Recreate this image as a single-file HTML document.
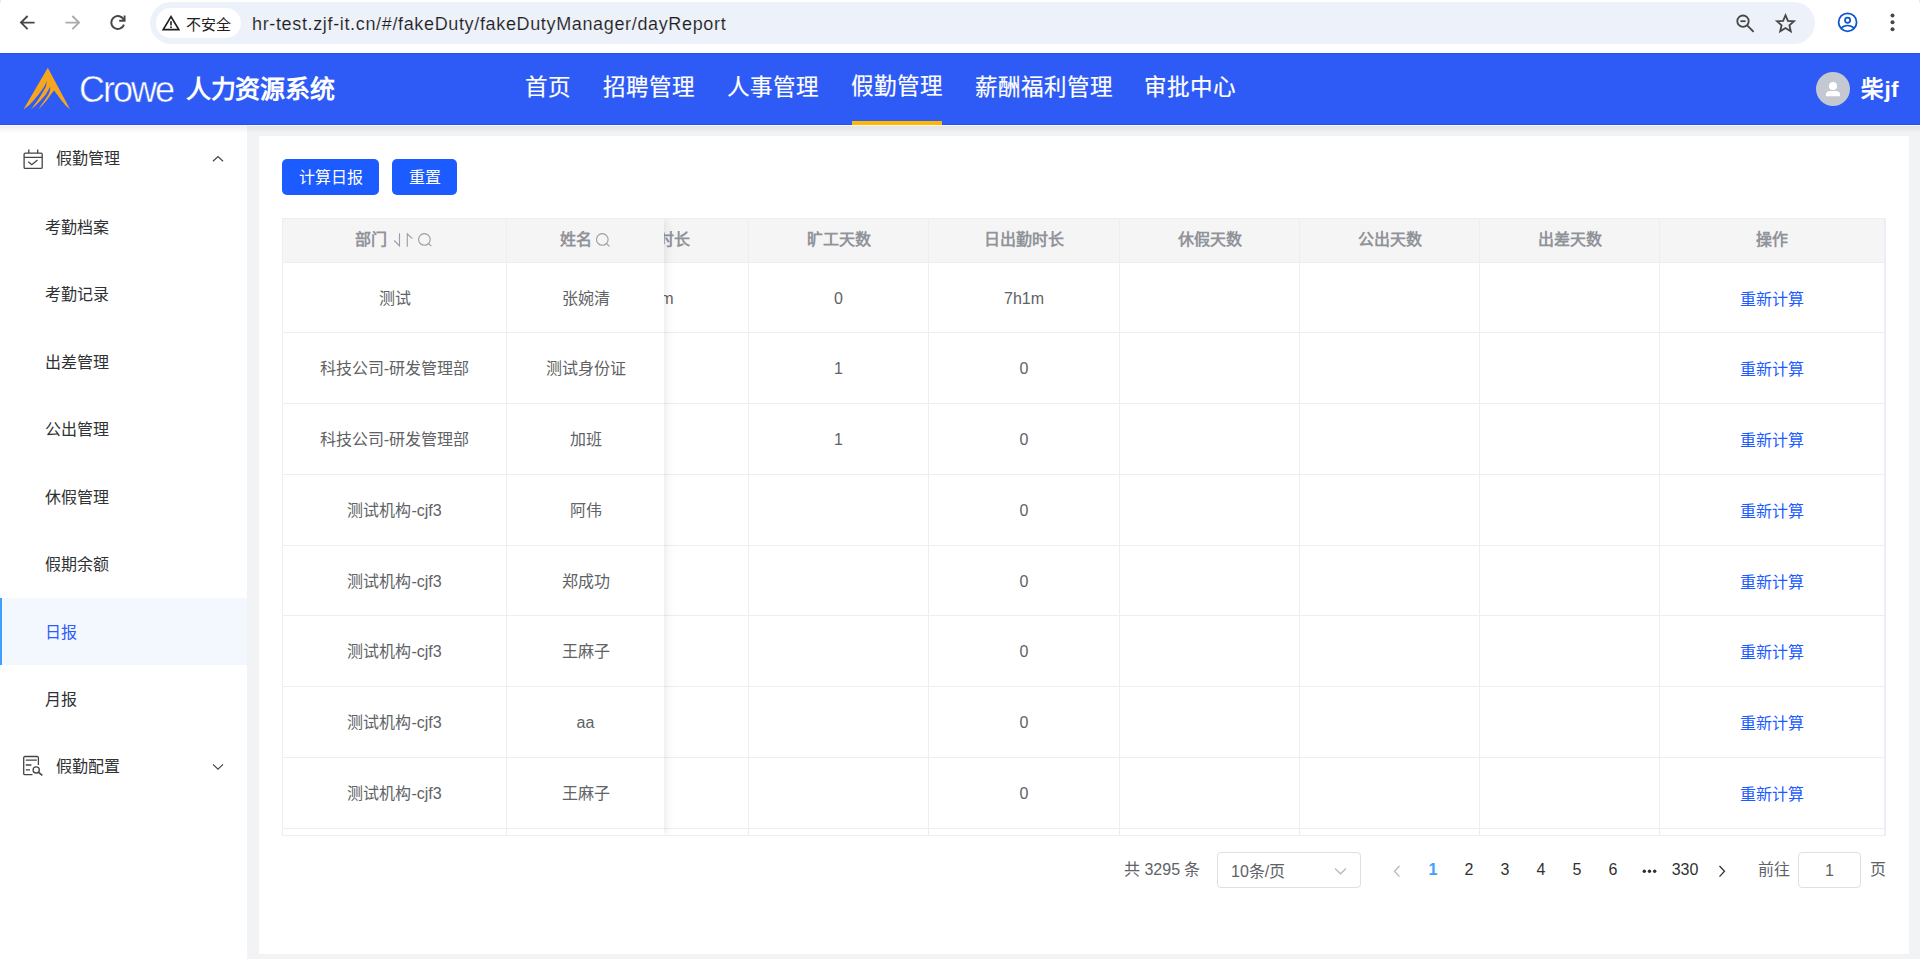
<!DOCTYPE html>
<html lang="zh-CN">
<head>
<meta charset="utf-8">
<title>dayReport</title>
<style>
*{box-sizing:border-box;margin:0;padding:0}
html,body{width:1920px;height:959px;overflow:hidden;background:#f2f3f5;font-family:"Liberation Sans",sans-serif;}
#root{position:relative;width:1920px;height:959px;overflow:hidden;background:#f2f3f5}
.abs{position:absolute}
.t{position:absolute;white-space:nowrap;line-height:1}

/* ---------- browser chrome ---------- */
#chrome{position:absolute;left:0;top:0;width:1920px;height:53px;background:#fff}
#pill{position:absolute;left:150px;top:2px;width:1665px;height:42px;border-radius:21px;background:#edf1fa}
#sec{position:absolute;left:156px;top:8px;width:85px;height:30px;border-radius:15px;background:#fff}

/* ---------- app header ---------- */
#hdr{position:absolute;left:0;top:53px;width:1920px;height:72px;background:#2e5bf6;border-top:1px solid #2551f3;border-bottom:1px solid #2551f3}
#hdrshadow{position:absolute;left:0;top:126px;width:1920px;height:7px;background:linear-gradient(#e2e3e5,rgba(242,243,245,0))}
#hline{position:absolute;left:0;top:125px;width:1920px;height:1px;background:#fbfbf6;z-index:5}
.nav{position:absolute;top:75px;font-size:22.5px;line-height:26px;color:#fff;white-space:nowrap;-webkit-text-stroke:0.2px #fff}

/* ---------- sidebar ---------- */
#side{position:absolute;left:0;top:125px;width:247px;height:834px;background:#fff}
#sideshadow{position:absolute;left:0;top:126px;width:247px;height:7px;background:linear-gradient(#eeeeee,rgba(255,255,255,0))}
.mi{position:absolute;left:45px;font-size:16px;line-height:20px;color:#303133;white-space:nowrap}
.mt{position:absolute;left:56px;font-size:16px;line-height:20px;color:#303133;white-space:nowrap}

/* ---------- content ---------- */
#panel{position:absolute;left:259px;top:136px;width:1650px;height:818px;background:#fff}
.btn{position:absolute;top:159px;height:36px;border-radius:5px;background:#1b5bff;color:#fff;font-size:16px;line-height:38px;text-align:center;white-space:nowrap}

/* table */
#tbl{position:absolute;left:282px;top:218px;width:1604px;height:618px;border:1px solid #ebeef5;background:#fff;overflow:hidden}
#thead{position:absolute;left:0;top:0;width:1602px;height:43px;background:#f5f5f5}
.hl{position:absolute;left:0;width:1602px;height:1px;background:#ebeef5}
.vl{position:absolute;top:0;width:1px;height:616px;background:#ebeef5}
.th{position:absolute;top:-1px;height:43px;line-height:43px;font-size:16px;font-weight:bold;color:#909399;text-align:center;white-space:nowrap}
.td{position:absolute;height:20px;line-height:20px;font-size:16px;color:#606266;text-align:center;white-space:nowrap}
.lk{color:#1b5bff}
#fixed{position:absolute;left:0;top:0;width:381px;height:616px;background:#fff;box-shadow:0 0 10px rgba(0,0,0,.12)}
#fixed .fh{position:absolute;left:0;top:0;width:381px;height:43px;background:#f5f5f5}

/* pagination */
.pg{position:absolute;top:860px;font-size:16px;line-height:20px;color:#303133;white-space:nowrap;text-align:center;width:36px}
</style>
</head>
<body>
<div id="root">

<!-- ================= browser chrome ================= -->
<div id="chrome">
  <div class="abs" style="left:0;top:0;width:1px;height:4px;background:linear-gradient(#d3e3fd,#fff)"></div>
  <div class="abs" style="left:1919px;top:0;width:1px;height:4px;background:linear-gradient(#d3e3fd,#fff)"></div>
  <div id="pill"></div>
  <div id="sec"></div>
  <!-- back -->
  <svg class="abs" style="left:18px;top:13px" width="20" height="20" viewBox="0 0 20 20"><path d="M16.6 9.6H3.4M9.6 3 3 9.6l6.6 6.6" fill="none" stroke="#474747" stroke-width="1.9"/></svg>
  <!-- forward -->
  <svg class="abs" style="left:62px;top:13px" width="20" height="20" viewBox="0 0 20 20"><path d="M3.4 9.6h13.2M10.4 3 17 9.6l-6.6 6.6" fill="none" stroke="#ababab" stroke-width="1.9"/></svg>
  <!-- reload -->
  <svg class="abs" style="left:107px;top:12px" width="22" height="22" viewBox="0 0 22 22"><path d="M16.9 8.2A6.5 6.5 0 1 0 17 12.6" fill="none" stroke="#474747" stroke-width="1.9"/><path d="M17.6 3.4v5.4h-5.4" fill="none" stroke="#474747" stroke-width="1.9"/></svg>
  <!-- warning -->
  <svg class="abs" style="left:161px;top:14px" width="20" height="18" viewBox="0 0 20 18"><path d="M10 2.6 2.2 15.6h15.6z" fill="none" stroke="#1f1f1f" stroke-width="1.7" stroke-linejoin="miter"/><rect x="9.2" y="7.2" width="1.6" height="4.2" fill="#1f1f1f"/><rect x="9.2" y="12.4" width="1.6" height="1.6" fill="#1f1f1f"/></svg>
  <div class="t" style="left:186px;top:16px;font-size:15px;line-height:17px;color:#1f1f1f">不安全</div>
  <div class="t" id="url" style="left:252px;top:13px;font-size:18px;line-height:22px;color:#1f1f1f;letter-spacing:0.65px;-webkit-text-stroke:0.12px #edf1fa">hr-test.zjf-it.cn/#/fakeDuty/fakeDutyManager/dayReport</div>
  <!-- zoom out -->
  <svg class="abs" style="left:1733px;top:11px" width="24" height="24" viewBox="0 0 24 24"><circle cx="10" cy="10.2" r="5.7" fill="none" stroke="#474747" stroke-width="1.8"/><path d="M14.2 14.4l6.4 6.4" stroke="#474747" stroke-width="1.9"/><path d="M7.4 10.2h5.2" stroke="#474747" stroke-width="1.8"/></svg>
  <!-- star -->
  <svg class="abs" style="left:1774px;top:12px" width="24" height="22" viewBox="0 0 24 22"><path d="M11.5 3.2l2.4 5.6 6.1.5-4.6 4 1.4 6-5.3-3.2-5.3 3.2 1.4-6-4.6-4 6.1-.5z" fill="none" stroke="#474747" stroke-width="1.8" stroke-linejoin="miter"/></svg>
  <!-- profile -->
  <svg class="abs" style="left:1836px;top:11px" width="24" height="24" viewBox="0 0 24 24"><circle cx="11.6" cy="11.3" r="9" fill="none" stroke="#0b57d0" stroke-width="1.8"/><circle cx="11.6" cy="9.2" r="2.6" fill="none" stroke="#0b57d0" stroke-width="1.7"/><path d="M5 17.4c1.8-2 4-2.9 6.6-2.9s4.800.9 6.600 2.900" fill="none" stroke="#0b57d0" stroke-width="1.7"/></svg>
  <!-- dots -->
  <svg class="abs" style="left:1886px;top:11px" width="14" height="24" viewBox="0 0 14 24"><circle cx="6.5" cy="4.500" r="2" fill="#474747"/><circle cx="6.5" cy="11.300" r="2" fill="#474747"/><circle cx="6.500" cy="18.300" r="2" fill="#474747"/></svg>
</div>

<!-- ================= header ================= -->
<div id="hdr"></div>
<svg class="abs" style="left:20px;top:64px" width="54" height="50" viewBox="20 64 54 50"><path d="M47.81 67.85L23.42 109.59L29.11 105.36L33.99 99.94L38.60 94.52L41.58 90.46L44.12 86.66L47.00 80.97L45.86 86.66L43.75 90.46L41.41 94.52L37.89 99.94L33.99 105.36L31.01 109.59L35.89 105.36L41.04 99.94L45.75 94.52L48.08 90.46L50.30 86.39L49.98 90.46L48.46 94.52L44.78 99.94L41.04 105.36L38.33 109.59L42.39 105.36L47.00 99.94L50.90 94.52L54.04 90.46L57.13 94.52L61.09 99.94L65.43 105.36L70.14 109.59Z" fill="#f5a61d"/></svg>
<div class="t" id="crowe" style="left:79px;top:70px;font-size:36px;line-height:40px;color:#fff;letter-spacing:-2px;-webkit-text-stroke:0.45px #2e5bf6">Crowe</div>
<div class="t" id="sysname" style="left:186px;top:74px;font-size:25px;line-height:30px;color:#fff;font-weight:bold;letter-spacing:-0.3px">人力资源系统</div>
<div class="nav" style="left:525px">首页</div>
<div class="nav" style="left:603px">招聘管理</div>
<div class="nav" style="left:727px">人事管理</div>
<div class="nav" style="left:851px;top:74px">假勤管理</div>
<div class="nav" style="left:975px">薪酬福利管理</div>
<div class="nav" style="left:1144px">审批中心</div>
<div class="abs" style="left:852px;top:121px;width:90px;height:4px;background:#ffb800"></div>
<div class="abs" style="left:1816px;top:72px;width:34px;height:34px;border-radius:17px;background:#c4c8d0"></div>
<svg class="abs" style="left:1816px;top:72px" width="34" height="34" viewBox="0 0 34 34"><circle cx="17" cy="14" r="4.100" fill="#fff"/><path d="M9.900 24.300v-1.600c0-2.200 1.800-3.600 4-3.600h6.200c2.200 0 4 1.400 4 3.600v1.600z" fill="#fff"/></svg>
<div class="t" id="uname" style="left:1861px;top:76px;letter-spacing:0.4px;font-size:22.5px;line-height:28px;color:#fff;font-weight:bold">柴jf</div>

<!-- ================= sidebar ================= -->
<div id="side"></div>
<div id="sideshadow"></div>
<div class="abs" style="left:0;top:598px;width:247px;height:67px;background:#f3f8ff"></div>
<div class="abs" style="left:0;top:598px;width:2px;height:67px;background:#409eff"></div>
<svg class="abs" style="left:20px;top:146px" width="26" height="26" viewBox="20 146 26 26"><g fill="none" stroke="#454545" stroke-width="1.300"><rect x="24.100" y="153.100" width="18.100" height="15.300" rx="1.200"/><path d="M24.100 157.300h18.100M28.800 149.400v3.700M37.700 149.400v3.700M28.300 161.700l3.500 3 5.700-4.800"/></g></svg>
<div class="mt" style="top:149px">假勤管理</div>
<svg class="abs" style="left:210px;top:152px" width="16" height="12" viewBox="210 152 16 12"><path d="M213 161.300l5-4.800 5 4.800" fill="none" stroke="#454545" stroke-width="1.200"/></svg>
<div class="mi" style="top:218px">考勤档案</div>
<div class="mi" style="top:285px">考勤记录</div>
<div class="mi" style="top:353px">出差管理</div>
<div class="mi" style="top:420px">公出管理</div>
<div class="mi" style="top:488px">休假管理</div>
<div class="mi" style="top:555px">假期余额</div>
<div class="mi" style="top:623px;color:#2e5bf6">日报</div>
<div class="mi" style="top:690px">月报</div>
<svg class="abs" style="left:20px;top:752px" width="28" height="28" viewBox="20 752 28 28"><g fill="none" stroke="#454545" stroke-width="1.300"><path d="M38.400 765v-7.300a1.200 1.200 0 0 0-1.200-1.200H24.900a1.200 1.200 0 0 0-1.200 1.200v15.700a1.200 1.200 0 0 0 1.200 1.200h7.600"/><path d="M25.800 760.200h11M25.800 765h5.600M25.800 769.800h4.200"/><circle cx="36.200" cy="769.900" r="3.100"/><path d="M38.500 772.300l3.800 3" stroke-width="1.700"/></g></svg>
<div class="mt" style="top:757px">假勤配置</div>
<svg class="abs" style="left:210px;top:760px" width="16" height="12" viewBox="210 760 16 12"><path d="M213 764.400l5 4.800 5-4.800" fill="none" stroke="#454545" stroke-width="1.200"/></svg>


<!-- ================= content ================= -->
<div id="hdrshadow" style="left:247px;width:1673px"></div>
<div id="hline"></div>
<div id="panel"></div>
<div class="btn" style="left:282px;width:97px">计算日报</div>
<div class="btn" style="left:392px;width:65px">重置</div>
<div id="tbl">
<div id="thead"></div>
<div class="th" style="left:285px;width:180px">加班时长</div>
<div class="th" style="left:466px;width:179px">旷工天数</div>
<div class="th" style="left:646px;width:190px">日出勤时长</div>
<div class="th" style="left:837px;width:179px">休假天数</div>
<div class="th" style="left:1017px;width:179px">公出天数</div>
<div class="th" style="left:1197px;width:179px">出差天数</div>
<div class="th" style="left:1377px;width:224px">操作</div>
<div class="td" style="left:285px;width:180px;top:69.5px">52m</div>
<div class="td" style="left:466px;width:179px;top:69.5px">0</div>
<div class="td" style="left:646px;width:190px;top:69.5px">7h1m</div>
<div class="td lk" style="left:1377px;width:224px;top:70.5px">重新计算</div>
<div class="td" style="left:466px;width:179px;top:140px">1</div>
<div class="td" style="left:646px;width:190px;top:140px">0</div>
<div class="td lk" style="left:1377px;width:224px;top:141px">重新计算</div>
<div class="td" style="left:466px;width:179px;top:211px">1</div>
<div class="td" style="left:646px;width:190px;top:211px">0</div>
<div class="td lk" style="left:1377px;width:224px;top:212px">重新计算</div>
<div class="td" style="left:646px;width:190px;top:282px">0</div>
<div class="td lk" style="left:1377px;width:224px;top:283px">重新计算</div>
<div class="td" style="left:646px;width:190px;top:352.5px">0</div>
<div class="td lk" style="left:1377px;width:224px;top:353.5px">重新计算</div>
<div class="td" style="left:646px;width:190px;top:423px">0</div>
<div class="td lk" style="left:1377px;width:224px;top:424px">重新计算</div>
<div class="td" style="left:646px;width:190px;top:494px">0</div>
<div class="td lk" style="left:1377px;width:224px;top:495px">重新计算</div>
<div class="td" style="left:646px;width:190px;top:565px">0</div>
<div class="td lk" style="left:1377px;width:224px;top:566px">重新计算</div>
<div class="hl" style="top:43px"></div>
<div class="hl" style="top:113px"></div>
<div class="hl" style="top:184px"></div>
<div class="hl" style="top:255px"></div>
<div class="hl" style="top:326px"></div>
<div class="hl" style="top:396px"></div>
<div class="hl" style="top:467px"></div>
<div class="hl" style="top:538px"></div>
<div class="hl" style="top:609px"></div>
<div class="vl" style="left:465px"></div>
<div class="vl" style="left:645px"></div>
<div class="vl" style="left:836px"></div>
<div class="vl" style="left:1016px"></div>
<div class="vl" style="left:1196px"></div>
<div class="vl" style="left:1376px"></div>
<div class="vl" style="left:1601px"></div>
<div id="fixed"><div class="fh"></div>
<div class="th" style="left:72px;width:32px">部门</div>
<svg class="abs" style="left:108px;top:11px" width="44" height="20" viewBox="391 230 44 20"><g fill="none" stroke="#9a9da3" stroke-width="1.100"><path d="M399.500 233.200v12.800l-5.300-5.500M407.300 246.700v-12.800l5 4.800"/><circle cx="424.400" cy="239.400" r="5.800"/><path d="M428.400 243.500l3 2.700"/></g></svg>
<div class="th" style="left:277px;width:32px">姓名</div>
<svg class="abs" style="left:311px;top:11px" width="20" height="20" viewBox="594 230 20 20"><g fill="none" stroke="#9a9da3" stroke-width="1.100"><circle cx="602.300" cy="239.400" r="5.800"/><path d="M606.300 243.500l3.200 2.800"/></g></svg>
<div class="td" style="left:0;width:223px;top:69.5px">测试</div>
<div class="td" style="left:224px;width:157px;top:69.5px">张婉清</div>
<div class="td" style="left:0;width:223px;top:140px">科技公司-研发管理部</div>
<div class="td" style="left:224px;width:157px;top:140px">测试身份证</div>
<div class="td" style="left:0;width:223px;top:211px">科技公司-研发管理部</div>
<div class="td" style="left:224px;width:157px;top:211px">加班</div>
<div class="td" style="left:0;width:223px;top:282px">测试机构-cjf3</div>
<div class="td" style="left:224px;width:157px;top:282px">阿伟</div>
<div class="td" style="left:0;width:223px;top:352.5px">测试机构-cjf3</div>
<div class="td" style="left:224px;width:157px;top:352.5px">郑成功</div>
<div class="td" style="left:0;width:223px;top:423px">测试机构-cjf3</div>
<div class="td" style="left:224px;width:157px;top:423px">王麻子</div>
<div class="td" style="left:0;width:223px;top:494px">测试机构-cjf3</div>
<div class="td" style="left:224px;width:157px;top:494px">aa</div>
<div class="td" style="left:0;width:223px;top:565px">测试机构-cjf3</div>
<div class="td" style="left:224px;width:157px;top:565px">王麻子</div>
<div class="hl" style="top:43px;width:381px"></div>
<div class="hl" style="top:113px;width:381px"></div>
<div class="hl" style="top:184px;width:381px"></div>
<div class="hl" style="top:255px;width:381px"></div>
<div class="hl" style="top:326px;width:381px"></div>
<div class="hl" style="top:396px;width:381px"></div>
<div class="hl" style="top:467px;width:381px"></div>
<div class="hl" style="top:538px;width:381px"></div>
<div class="hl" style="top:609px;width:381px"></div>
<div class="vl" style="left:223px"></div>
</div>
</div>
<div class="t" style="left:1124px;top:860px;font-size:16px;line-height:20px;color:#606266">共 3295 条</div>
<div class="abs" style="left:1217px;top:852px;width:144px;height:36px;border:1px solid #dcdfe6;border-radius:4px;background:#fff"></div>
<div class="t" style="left:1231px;top:861.5px;font-size:16px;line-height:20px;color:#606266">10条/页</div>
<svg class="abs" style="left:1331.500px;top:864px" width="16" height="14" viewBox="1331 863 16 14"><path d="M1334 867.500l5.500 5.300 5.500-5.300" fill="none" stroke="#b4b8bf" stroke-width="1.200"/></svg>
<svg class="abs" style="left:1390.300px;top:861.700px" width="14" height="18" viewBox="1390 861 14 18"><path d="M1399.500 865l-5 5.300 5 5.300" fill="none" stroke="#b4b8bf" stroke-width="1.300"/></svg>
<div class="pg" style="left:1415px;color:#409eff;font-weight:bold">1</div>
<div class="pg" style="left:1451px">2</div>
<div class="pg" style="left:1487px">3</div>
<div class="pg" style="left:1523px">4</div>
<div class="pg" style="left:1559px">5</div>
<div class="pg" style="left:1595px">6</div>
<svg class="abs" style="left:1640.400px;top:867px" width="20" height="8" viewBox="1640 866 20 8"><circle cx="1644.300" cy="870.300" r="1.700" fill="#303133"/><circle cx="1649.500" cy="870.300" r="1.700" fill="#303133"/><circle cx="1654.700" cy="870.300" r="1.700" fill="#303133"/></svg>
<div class="pg" style="left:1667px">330</div>
<svg class="abs" style="left:1715px;top:862px" width="14" height="18" viewBox="1715 861 14 18"><path d="M1719.500 865l5 5.300-5 5.300" fill="none" stroke="#303133" stroke-width="1.300"/></svg>
<div class="t" style="left:1758px;top:860px;font-size:16px;line-height:20px;color:#606266">前往</div>
<div class="abs" style="left:1798px;top:852px;width:63px;height:36px;border:1px solid #dcdfe6;border-radius:4px;background:#fff"></div>
<div class="t" style="left:1798px;width:63px;text-align:center;top:861px;font-size:16px;line-height:20px;color:#606266">1</div>
<div class="t" style="left:1870px;top:860px;font-size:16px;line-height:20px;color:#606266">页</div>


</div>
</body>
</html>
